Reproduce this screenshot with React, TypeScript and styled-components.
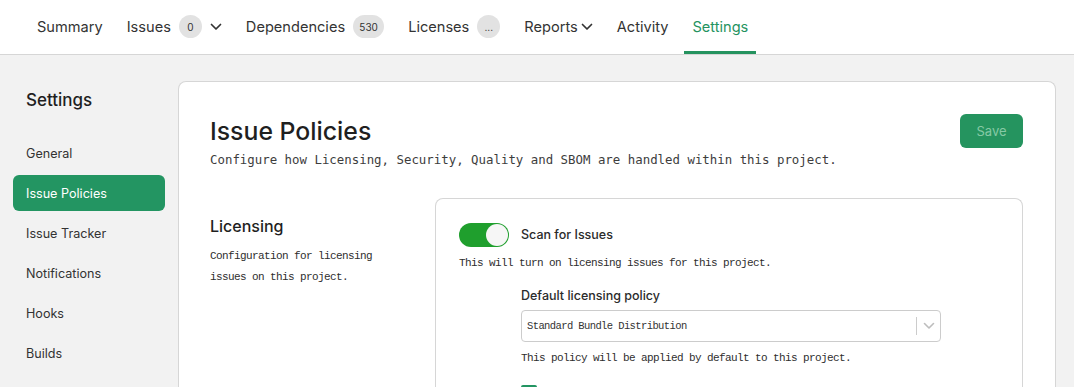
import React from "react";
import styled, { createGlobalStyle } from "styled-components";

const GlobalStyle = createGlobalStyle`
  html, body {
    margin: 0;
    padding: 0;
    background: #f2f2f2;
    font-family: Inter, "Noto Sans", sans-serif;
    color: #2b2b2b;
  }
  * { box-sizing: border-box; }
`;

const MONO = `"DejaVu Sans Mono", "Liberation Mono", monospace`;
const MONO_LIGHT = `"Liberation Mono", "DejaVu Sans Mono", monospace`;

const Page = styled.div`
  display: flex;
  flex-direction: column;
  width: 1074px;
  height: 387px;
  overflow: hidden;
`;

const TopNav = styled.nav`
  display: flex;
  align-items: stretch;
  gap: 8px;
  height: 55px;
  padding-left: 29px;
  background: #fff;
  border-bottom: 1px solid #d6d6d6;
`;

interface TabProps {
  active?: boolean;
}
const Tab = styled.div<TabProps>`
  display: flex;
  align-items: center;
  gap: 8px;
  padding: 2px 8px 0;
  font-size: 14.6px;
  color: ${(p) => (p.active ? "#25935f" : "#333")};
  border-bottom: 3px solid ${(p) => (p.active ? "#25935f" : "transparent")};
`;

interface BadgeProps {
  wide?: boolean;
}
const Badge = styled.span<BadgeProps>`
  display: inline-flex;
  align-items: center;
  justify-content: center;
  height: 23px;
  min-width: ${(p) => (p.wide ? "31px" : "23px")};
  padding: 0 ${(p) => (p.wide ? "5px" : "0")};
  border-radius: 12px;
  background: #e2e2e2;
  font-size: 10px;
  color: #333;
`;

const TightChevron = styled.span`
  display: inline-flex;
  margin-left: -5px;
`;

const Chevron = () => (
  <svg width="12" height="8" viewBox="0 0 12 8" fill="none">
    <path d="M1.5 1.5L6 6l4.5-4.5" stroke="#333" strokeWidth="1.7" strokeLinecap="round" strokeLinejoin="round" />
  </svg>
);

const Body = styled.div`
  display: flex;
  flex: 1;
  min-height: 0;
`;

const Sidebar = styled.aside`
  width: 178px;
  flex-shrink: 0;
  padding: 33px 13px 0;
`;

const SideTitle = styled.h2`
  margin: 0 0 23px;
  padding-left: 13px;
  font-size: 17px;
  line-height: 24px;
  font-weight: 500;
  color: #1f1f1f;
`;

const SideMenu = styled.ul`
  list-style: none;
  margin: 0;
  padding: 0;
  display: flex;
  flex-direction: column;
  gap: 4px;
`;

const SideItem = styled.li<TabProps>`
  height: 36px;
  display: flex;
  align-items: center;
  padding: 0 13px;
  border-radius: 6px;
  font-size: 12.6px;
  color: ${(p) => (p.active ? "#fff" : "#333")};
  background: ${(p) => (p.active ? "#239562" : "transparent")};
`;

const Card = styled.main`
  flex: 1;
  margin: 26px 18px 0 0;
  background: #fff;
  border: 1px solid #d6d6d6;
  border-bottom: none;
  border-radius: 8px 8px 0 0;
  padding: 32px 32px 0 31px;
`;

const Header = styled.div`
  display: flex;
  justify-content: space-between;
  align-items: flex-start;
`;

const Title = styled.h1`
  margin: 0;
  font-size: 24.8px;
  line-height: 34px;
  font-weight: 500;
  color: #1f1f1f;
`;

const Description = styled.p`
  margin: 2px 0 0;
  font-family: ${MONO};
  font-size: 12.4px;
  line-height: 20px;
  color: #3d3d3d;
`;

const SaveButton = styled.button`
  width: 63px;
  height: 34px;
  border: none;
  border-radius: 6px;
  background: #25945f;
  color: #86c9a5;
  font-family: Inter, sans-serif;
  font-size: 13px;
`;

const Section = styled.section`
  display: flex;
  gap: 24px;
  margin-top: 28px;
`;

const SectionInfo = styled.div`
  width: 201px;
  flex-shrink: 0;
  padding-top: 16px;
`;

const SectionTitle = styled.h3`
  margin: 0;
  font-size: 16px;
  line-height: 24px;
  font-weight: 500;
  color: #1f1f1f;
`;

const SmallMono = styled.p`
  margin: 0;
  font-family: ${MONO_LIGHT};
  font-size: 11px;
  letter-spacing: -0.6px;
  line-height: 21px;
  color: #2e2e2e;
`;

const SectionInfoText = styled(SmallMono)`
  margin-top: 8px;
`;

const Panel = styled.div`
  flex: 1;
  border: 1px solid #d6d6d6;
  border-bottom: none;
  border-radius: 8px 8px 0 0;
  padding: 24px 23px 0;
`;

const ToggleRow = styled.div`
  display: flex;
  align-items: center;
  gap: 12px;
`;

const Toggle = styled.div`
  width: 50px;
  height: 24px;
  border-radius: 12px;
  background: #1f9f2d;
  display: flex;
  align-items: center;
  justify-content: flex-end;
  padding-right: 1px;
`;

const Knob = styled.span`
  width: 22px;
  height: 22px;
  border-radius: 50%;
  background: #f6f6f6;
`;

const Label = styled.span`
  font-size: 12.5px;
  font-weight: 500;
  color: #2b2b2b;
  line-height: 20px;
`;

const Hint = styled(SmallMono)`
  line-height: 20px;
  margin-top: 6px;
`;

const Indented = styled.div`
  margin-left: 62px;
  margin-top: 13px;
  display: flex;
  flex-direction: column;
`;

const Select = styled.div`
  width: 420px;
  height: 32px;
  margin-top: 4px;
  border: 1px solid #cccccc;
  border-radius: 4px;
  display: flex;
  align-items: center;
  padding-left: 5px;
`;

const SelectValue = styled.span`
  flex: 1;
  font-family: ${MONO_LIGHT};
  font-size: 10.5px;
  letter-spacing: -0.6px;
  color: #333;
`;

const SelectDivider = styled.span`
  width: 1px;
  height: 18px;
  background: #cccccc;
`;

const SelectArrow = styled.span`
  display: flex;
  align-items: center;
  justify-content: center;
  width: 23px;
`;

const Checkbox = styled.span`
  width: 16px;
  height: 16px;
  margin-top: 17px;
  border-radius: 2px;
  background: #239562;
`;

export default function App() {
  return (
    <>
      <GlobalStyle />
      <Page>
        <TopNav>
          <Tab>Summary</Tab>
          <Tab>
            Issues <Badge>0</Badge>
            <Chevron />
          </Tab>
          <Tab>
            Dependencies <Badge wide>530</Badge>
          </Tab>
          <Tab>
            Licenses <Badge>...</Badge>
          </Tab>
          <Tab>
            Reports
            <TightChevron>
              <Chevron />
            </TightChevron>
          </Tab>
          <Tab>Activity</Tab>
          <Tab active>Settings</Tab>
        </TopNav>
        <Body>
          <Sidebar>
            <SideTitle>Settings</SideTitle>
            <SideMenu>
              <SideItem>General</SideItem>
              <SideItem active>Issue Policies</SideItem>
              <SideItem>Issue Tracker</SideItem>
              <SideItem>Notifications</SideItem>
              <SideItem>Hooks</SideItem>
              <SideItem>Builds</SideItem>
            </SideMenu>
          </Sidebar>
          <Card>
            <Header>
              <div>
                <Title>Issue Policies</Title>
                <Description>
                  Configure how Licensing, Security, Quality and SBOM are handled within this project.
                </Description>
              </div>
              <SaveButton disabled>Save</SaveButton>
            </Header>
            <Section>
              <SectionInfo>
                <SectionTitle>Licensing</SectionTitle>
                <SectionInfoText>
                  Configuration for licensing
                  <br />
                  issues on this project.
                </SectionInfoText>
              </SectionInfo>
              <Panel>
                <ToggleRow>
                  <Toggle>
                    <Knob />
                  </Toggle>
                  <Label>Scan for Issues</Label>
                </ToggleRow>
                <Hint>This will turn on licensing issues for this project.</Hint>
                <Indented>
                  <Label>Default licensing policy</Label>
                  <Select>
                    <SelectValue>Standard Bundle Distribution</SelectValue>
                    <SelectDivider />
                    <SelectArrow>
                      <svg width="12" height="8" viewBox="0 0 12 8" fill="none">
                        <path d="M1.5 1.5L6 6l4.5-4.5" stroke="#bdbdbd" strokeWidth="1.6" strokeLinecap="round" strokeLinejoin="round" />
                      </svg>
                    </SelectArrow>
                  </Select>
                  <Hint>This policy will be applied by default to this project.</Hint>
                  <Checkbox />
                </Indented>
              </Panel>
            </Section>
          </Card>
        </Body>
      </Page>
    </>
  );
}
